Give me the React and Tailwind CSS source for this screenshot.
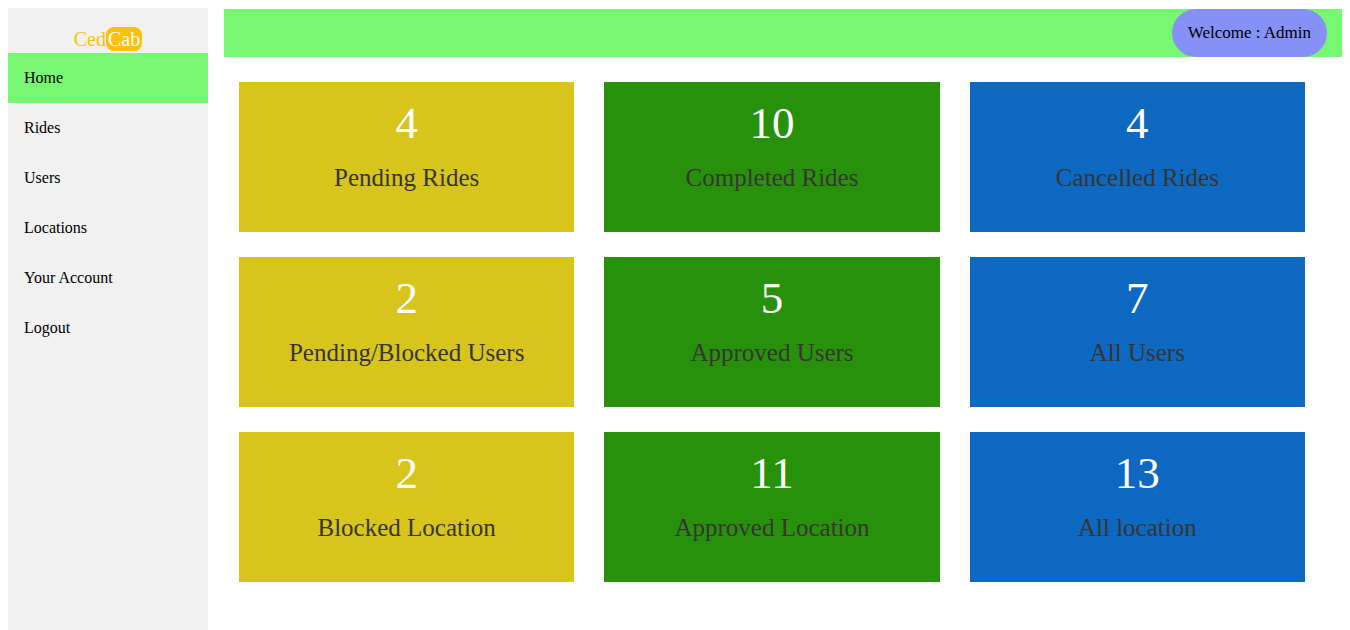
const links = ["Home", "Rides", "Users", "Locations", "Your Account", "Logout"];

const tiles = [
  { count: 4, label: "Pending Rides", color: "bg-[#d7c51b]" },
  { count: 10, label: "Completed Rides", color: "bg-[#27910c]" },
  { count: 4, label: "Cancelled Rides", color: "bg-[#0c68c0]" },
  { count: 2, label: "Pending/Blocked Users", color: "bg-[#d7c51b]" },
  { count: 5, label: "Approved Users", color: "bg-[#27910c]" },
  { count: 7, label: "All Users", color: "bg-[#0c68c0]" },
  { count: 2, label: "Blocked Location", color: "bg-[#d7c51b]" },
  { count: 11, label: "Approved Location", color: "bg-[#27910c]" },
  { count: 13, label: "All location", color: "bg-[#0c68c0]" },
];

function Sidebar() {
  return (
    <aside className="w-[200px] shrink-0 bg-[#f1f1f1]">
      <div className="flex h-[45px] items-end justify-center pb-0.5 text-xl leading-6 text-[#ffc107]">
        <span>Ced</span>
        <span className="rounded-lg bg-[#ffc107] px-0.5 text-white">Cab</span>
      </div>
      <nav className="flex flex-col">
        {links.map((name, i) => (
          <a
            key={name}
            href="#"
            className={
              i === 0
                ? "bg-[#77f772] px-4 py-[13px] text-base text-black"
                : "px-4 py-[13px] text-base text-black"
            }
          >
            {name}
          </a>
        ))}
      </nav>
    </aside>
  );
}

function Tile({ count, label, color }) {
  return (
    <a href="#" className={`flex h-[150px] flex-col items-center gap-4 pt-4 text-center ${color}`}>
      <span className="text-[45px] leading-[50px] text-white">{count}</span>
      <span className="text-[25px] leading-7 text-[#383530]">{label}</span>
    </a>
  );
}

export default function App() {
  return (
    <div className="flex min-h-screen gap-4 bg-white pt-2 pr-2 pl-2 font-['Liberation_Serif',serif] text-black">
      <Sidebar />
      <main className="min-w-0 flex-1 pt-px">
        <header className="flex h-12 justify-end bg-[#77f772] pr-[15px]">
          <div className="flex items-center rounded-full bg-[#8591f7] px-4 text-[17px]">
            Welcome : Admin
          </div>
        </header>
        <section className="grid grid-cols-3 gap-x-[30px] gap-y-[25px] pt-[25px] pr-[37px] pb-12 pl-[15px]">
          {tiles.map((tile) => (
            <Tile key={tile.label} {...tile} />
          ))}
        </section>
      </main>
    </div>
  );
}
